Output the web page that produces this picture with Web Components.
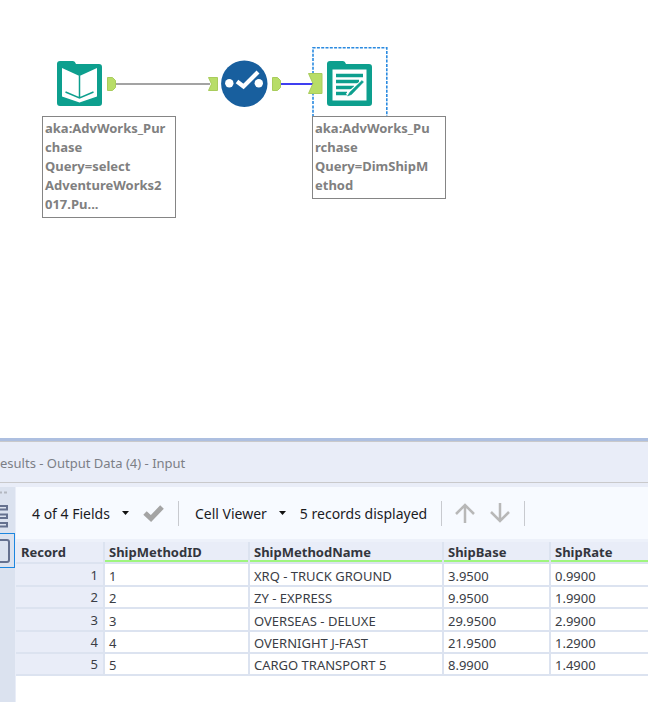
<!DOCTYPE html>
<html lang="en">
<head>
<meta charset="utf-8">
<title>Workflow</title>
<style>
html, body { margin: 0; height: 100%; }
body { background: #fff; font-family: "Noto Sans", "Open Sans", sans-serif; font-size: 13px; color: #3a3d45; overflow: hidden; }
</style>
</head>
<body>
<workflow-app></workflow-app>

<template id="t-app">
  <style>
    :host { display: flex; flex-direction: column; height: 100vh; }
    workflow-canvas { flex: 1; min-height: 0; }
  </style>
  <workflow-canvas></workflow-canvas>
  <results-panel></results-panel>
</template>

<template id="t-canvas">
  <style>
    :host { display: block; position: relative; overflow: hidden; background: #fff; }
    svg.wires { position: absolute; left: 0; top: 0; width: 100%; height: 100%; }
    workflow-tool { position: absolute; top: 47px; }
    .in { left: 42px; }
    .sel { left: 207px; }
    .out { left: 312px; }
  </style>
  <svg class="wires" aria-hidden="true">
    <path d="M115 84H210" stroke="#a3a3a3" stroke-width="2"/>
    <path d="M280 84H313" stroke="#3f3ff0" stroke-width="2"/>
    <g fill="#b8dd68" stroke="#a9cc5c">
      <path d="M107.500 77.500h5l3 3v7l-3 3h-5z"/>
      <path d="M208.500 77.500h9v13h-9l3-6.500z"/>
      <path d="M272.500 77.500h5l3 3v7l-3 3h-5z"/>
    </g>
  </svg>
  <workflow-tool class="in">
    <svg slot="icon" width="75" height="69" viewBox="42 47 75 69" role="img" aria-label="Input Data">
      <path d="M60 61H73Q75 61 76 64H99Q102 64 102 67V103Q102 106 99 106H60Q57 106 57 103V64Q57 61 60 61Z" fill="#0d9f8e"/>
      <path d="M62 68L79.500 76L97 68V96.500L79.500 102.500L62 96.500Z" fill="#fff"/>
      <path d="M79.500 75.500V98M65.500 92L79.500 98L93.500 92" fill="none" stroke="#0d9f8e" stroke-width="1.500"/>
    </svg>
    <tool-note>aka:AdvWorks_Pur<br>chase<br>Query=select<br>AdventureWorks2<br>017.Pu...</tool-note>
  </workflow-tool>
  <workflow-tool class="sel">
    <svg slot="icon" width="75" height="69" viewBox="207 47 75 69" role="img" aria-label="Select">
      <circle cx="244.300" cy="83.700" r="23.200" fill="#185f9e"/>
      <circle cx="229.300" cy="83.200" r="4.200" fill="#fff"/>
      <circle cx="258.800" cy="83.300" r="4.200" fill="#fff"/>
      <path d="M237 81.500L243.500 86.500L258 72" fill="none" stroke="#fff" stroke-width="4.200"/>
    </svg>
  </workflow-tool>
  <workflow-tool class="out">
    <svg slot="icon" width="75" height="69" viewBox="312 47 75 69" overflow="visible" role="img" aria-label="Output Data">
      <path d="M313 117V47.800H386.800V117" fill="none" stroke="#2a8ae0" stroke-width="1.600" stroke-dasharray="3 1.300"/>
      <path d="M308.500 73.500H322V93.500H308.500L313 83.500Z" fill="#b8dd68" stroke="#a9cc5c"/>
      <path d="M330 61H343Q345 61 346 64H369Q372 64 372 67V103Q372 106 369 106H330Q327 106 327 103V64Q327 61 330 61Z" fill="#0d9f8e"/>
      <path d="M332.500 69.500H366.500V100.500H332.500Z" fill="#fff"/>
      <path d="M336 75.500H363M336 81.500H359M336 87.500H354M336 93.500H347" stroke="#0d9f8e" stroke-width="3.400"/>
      <path d="M347.500 95.500L364 80.500" stroke="#fff" stroke-width="5"/>
      <path d="M347.500 96L350 92L362 80.500L363.500 82L351.500 94.500Z" fill="#0d9f8e" stroke="#0d9f8e" stroke-width=".5"/>
    </svg>
    <tool-note>aka:AdvWorks_Pu<br>rchase<br>Query=DimShipM<br>ethod</tool-note>
  </workflow-tool>
</template>

<template id="t-tool">
  <style>
    :host { display: block; }
    ::slotted(svg) { display: block; }
  </style>
  <slot name="icon"></slot>
  <slot></slot>
</template>

<template id="t-note">
  <style>
    :host { display: block; position: relative; box-sizing: border-box; width: max-content; min-width: 134px; padding: 2px 10px 3px 2px; border: 1px solid #858585; background: #fff; color: #808080; font-weight: 700; font-size: 13px; line-height: 19px; white-space: nowrap; }
  </style>
  <slot></slot>
</template>

<template id="t-results">
  <style>
    :host { display: flex; flex-direction: column; min-height: 264px; background: #e9edf8; }
    header { box-sizing: border-box; height: 45px; border-top: 3px solid #adbfe0; border-bottom: 1px solid #c9c9cb; box-shadow: inset 0 1px #c9c9cb; overflow: hidden; white-space: nowrap; }
    h2 { margin: 0; font-size: 13px; font-weight: 400; line-height: 45px; color: #7c7f86; }
    .body { flex: 1; display: flex; gap: 1px; padding-top: 4px; }
    .main { flex: 1; min-width: 0; display: flex; flex-direction: column; background: #fff; }
  </style>
  <header><h2>esults - Output Data (4) - Input</h2></header>
  <div class="body">
    <results-rail></results-rail>
    <div class="main">
      <results-toolbar></results-toolbar>
      <record-grid></record-grid>
    </div>
  </div>
</template>

<template id="t-rail">
  <style>
    :host { display: flex; flex-direction: column; width: 15px; overflow: hidden; background: #dbe2ef; }
    button { display: block; box-sizing: border-box; width: 15px; padding: 0; border: 0; background: none; }
    svg { display: block; }
    .list { height: 46px; }
    .active { height: 35px; border: 1px solid #1c86df; border-left: 0; }
  </style>
  <button class="list" aria-label="Messages"><svg width="15" height="46" fill="none">
    <path d="M0 5.500h2M4 5.500h3" stroke="#b3b7c0" stroke-width="2"/>
    <path d="M-2 19H7V22.500H-2ZM-2 27.500H7V31H-2ZM-2 36H7V39.500H-2Z" stroke="#65718f" stroke-width="2"/></svg></button>
  <button class="active" aria-label="Data"><svg width="14" height="33" fill="none">
    <rect x="-8" y="6" width="17" height="22" rx="2" stroke="#65718f" stroke-width="2"/></svg></button>
</template>

<template id="t-toolbar">
  <style>
    :host { display: flex; align-items: center; box-sizing: border-box; height: 55px; padding: 0 16px; background: #f7faff; border-bottom: 3px solid #edf1fa; color: #1b1b1f; font-size: 14px; white-space: nowrap; overflow: hidden; }
    button { display: flex; align-items: center; gap: 12px; padding: 0; border: 0; background: none; font: inherit; color: inherit; }
    svg { display: block; }
    .sep { width: 1px; height: 25px; background: #c8cacf; margin: 0 16px 0 14px; }
    .sep.narrow { margin-right: 13px; }
    .check { margin-left: 14px; }
    .count { margin-left: 14px; }
    .up { margin-right: 15px; }
  </style>
  <button>4 of 4 Fields <svg width="7" height="4"><path d="M0 0H7L3.500 4Z" fill="#111"/></svg></button>
  <button class="check" aria-label="Apply"><svg width="21" height="18" fill="none"><path d="M2 9L8 14.500L19 3" stroke="#a4a4a4" stroke-width="5"/></svg></button>
  <span class="sep"></span>
  <button>Cell Viewer <svg width="7" height="4"><path d="M0 0H7L3.500 4Z" fill="#111"/></svg></button>
  <span class="count">5 records displayed</span>
  <span class="sep narrow"></span>
  <button class="up" aria-label="Previous"><svg width="20" height="20" fill="none" stroke="#b8b8b8" stroke-width="2.500"><path d="M10 20V2M1 11L10 2L19 11"/></svg></button>
  <button aria-label="Next"><svg width="20" height="20" fill="none" stroke="#b8b8b8" stroke-width="2.500"><path d="M10 0V18M1 9L10 18L19 9"/></svg></button>
  <span class="sep"></span>
</template>

<template id="t-grid">
  <style>
    :host { display: block; overflow: hidden; }
    table { width: 100%; table-layout: fixed; border-collapse: separate; border-spacing: 0; font-size: 13px; line-height: 16px; }
    .c1 { width: 89px; } .c2 { width: 145px; } .c3 { width: 194px; } .c4 { width: 107px; }
    th, td { box-sizing: border-box; padding: 0 0 0 4px; text-align: left; white-space: nowrap; border-right: 2px solid #dce3f0; border-bottom: 2px solid #dce3f0; }
    thead th { height: 22px; background: #e9edf8; font-weight: 700; color: #33363d; box-shadow: inset 0 -2px #9ff57e; }
    thead th:first-child { box-shadow: none; padding-left: 5px; }
    tbody th { background: #e9edf8; font-weight: 400; text-align: right; padding: 0 5px 0 0; }
    tbody tr > * { height: 22px; }
    tbody tr:nth-child(4n + 1) > *, tbody tr:nth-child(4n + 3) > * { height: 23px; }
    tbody tr:last-child > * { height: 22px; }
    td { background: #fff; padding-top: 2px; }
    tr > :last-child { border-right: 0; }
  </style>
  <table>
    <colgroup><col class="c1"><col class="c2"><col class="c3"><col class="c4"><col></colgroup>
    <thead><tr><th scope="col">Record</th><th scope="col">ShipMethodID</th><th scope="col">ShipMethodName</th><th scope="col">ShipBase</th><th scope="col">ShipRate</th></tr></thead>
    <tbody>
      <tr><th scope="row">1</th><td>1</td><td>XRQ - TRUCK GROUND</td><td>3.9500</td><td>0.9900</td></tr>
      <tr><th scope="row">2</th><td>2</td><td>ZY - EXPRESS</td><td>9.9500</td><td>1.9900</td></tr>
      <tr><th scope="row">3</th><td>3</td><td>OVERSEAS - DELUXE</td><td>29.9500</td><td>2.9900</td></tr>
      <tr><th scope="row">4</th><td>4</td><td>OVERNIGHT J-FAST</td><td>21.9500</td><td>1.2900</td></tr>
      <tr><th scope="row">5</th><td>5</td><td>CARGO TRANSPORT 5</td><td>8.9900</td><td>1.4900</td></tr>
    </tbody>
  </table>
</template>

<script>
const define = (name, id) => customElements.define(name, class extends HTMLElement {
  constructor() {
    super();
    this.attachShadow({ mode: "open" }).append(document.getElementById(id).content.cloneNode(true));
  }
});
define("tool-note", "t-note");
define("workflow-tool", "t-tool");
define("workflow-canvas", "t-canvas");
define("results-rail", "t-rail");
define("results-toolbar", "t-toolbar");
define("record-grid", "t-grid");
define("results-panel", "t-results");
define("workflow-app", "t-app");
</script>
</body>
</html>
